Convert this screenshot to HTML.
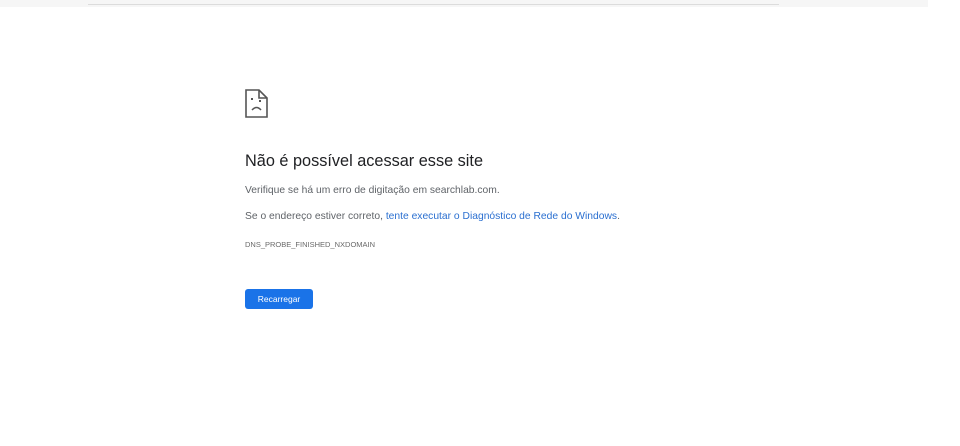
<!DOCTYPE html>
<html><head><meta charset="utf-8"><style>
html,body{margin:0;padding:0;width:960px;height:446px;background:#fff;overflow:hidden;font-family:"Liberation Sans","DejaVu Sans",sans-serif;position:relative}
.bar{position:absolute;left:0;top:0;width:928px;height:7px;background:#f6f6f6}
.bar2{position:absolute;left:88px;top:4px;width:691px;height:1px;background:#dcdcdc}
.abs{position:absolute;white-space:nowrap}
h1{position:absolute;left:245px;top:152px;margin:0;font-size:16.3px;font-weight:normal;color:#202124}
.p{font-size:10.3px;color:#5f6368}
.link{color:#2a6fd0}
.code{font-size:7.5px;color:#6a6a6a}
.btn{position:absolute;left:245px;top:289px;width:68px;height:20px;background:#1a73e8;border-radius:3px;color:#fff;font-size:8.5px;text-align:center;line-height:20px}
</style></head><body>
<div class="bar"></div><div class="bar2"></div>
<svg class="abs" style="left:245px;top:89px" width="24" height="30" viewBox="0 0 24 30">
<path d="M1 1H14L22 9V28H1Z" fill="none" stroke="#555" stroke-width="1.6"/>
<path d="M14 1V9H22" fill="none" stroke="#555" stroke-width="1.6"/>
<rect x="6" y="9" width="2" height="2" fill="#555"/><rect x="14" y="11" width="2" height="2" fill="#555"/>
<path d="M7 21Q11.5 16 16 21" fill="none" stroke="#555" stroke-width="1.5"/>
</svg>
<h1>Não é possível acessar esse site</h1>
<div class="abs p" style="left:245px;top:185px">Verifique se há um erro de digitação em searchlab.com.</div>
<div class="abs p" style="left:245px;top:211px">Se o endereço estiver correto, <span class="link">tente executar o Diagnóstico de Rede do Windows</span>.</div>
<div class="abs code" style="left:245px;top:240px">DNS_PROBE_FINISHED_NXDOMAIN</div>
<div class="btn">Recarregar</div>
</body></html>
